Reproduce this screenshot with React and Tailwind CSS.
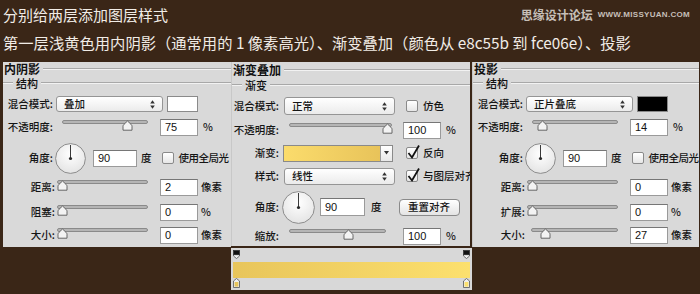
import React from "react";

function UpDown() {
  return (
    <svg width="5" height="9" viewBox="0 0 5 9">
      <path d="M2.5 0.3 L4.8 3.4 L0.2 3.4 Z M2.5 8.7 L4.8 5.6 L0.2 5.6 Z" fill="#333" />
    </svg>
  );
}

function Dropdown({ text, className }) {
  return (
    <div
      className={`flex shrink-0 items-center justify-between rounded-[3px] border border-[#959595] bg-linear-to-b from-white to-[#ebebeb] pl-[7px] pr-[7px] ${className}`}
    >
      <span className="leading-none">{text}</span>
      <UpDown />
    </div>
  );
}

function Slider({ className, pos }) {
  return (
    <div className={`relative h-[16px] shrink-0 ${className}`}>
      <div className="absolute left-0 right-0 top-[1px] h-[4px] rounded-full border border-[#8a8a8a] bg-[#b5b5b5]" />
      <svg className="absolute top-[1px]" style={{ left: pos - 5.5 }} width="11" height="11" viewBox="0 0 11 11">
        <path d="M1 10.2 L1 6.2 Q1 5.2 2 4.3 L5.5 1 L9 4.3 Q10 5.2 10 6.2 L10 10.2 Z" fill="#f3f3f3" stroke="#666" strokeWidth="1" />
      </svg>
    </div>
  );
}

function Field({ v, className }) {
  return (
    <div
      className={`flex shrink-0 items-center border border-[#9a9a9a] border-t-[#767676] bg-white pl-[4px] font-['Liberation_Sans',sans-serif] text-[11px] leading-none text-[#111] ${className}`}
    >
      {v}
    </div>
  );
}

function Dial({ size }) {
  const r = size / 2;
  return (
    <svg className="shrink-0" width={size} height={size} viewBox={`0 0 ${size} ${size}`}>
      <defs>
        <radialGradient id="dialg" cx="50%" cy="35%" r="65%">
          <stop offset="0%" stopColor="#ffffff" />
          <stop offset="100%" stopColor="#e4e4e4" />
        </radialGradient>
      </defs>
      <circle cx={r} cy={r} r={r - 0.6} fill="url(#dialg)" stroke="#8c8c8c" strokeWidth="1" />
      <line x1={r} y1={r} x2={r} y2={2} stroke="#3a3a3a" strokeWidth="1" />
      <circle cx={r} cy={r} r="1.6" fill="#2a2a2a" />
    </svg>
  );
}

function Check({ checked, className }) {
  return (
    <div
      className={`relative h-[12px] w-[12px] shrink-0 rounded-[2px] border border-[#8a8a8a] bg-linear-to-b from-white to-[#e6e6e6] ${className}`}
    >
      {checked && (
        <svg className="absolute -left-[1px] -top-[4px]" width="15" height="16" viewBox="0 0 15 16">
          <path d="M2.5 9 L6 13.5 L13 1.5" fill="none" stroke="#111" strokeWidth="1.8" />
        </svg>
      )}
    </div>
  );
}

function Etch({ className }) {
  return <div className={`h-[2px] border-t border-b border-t-[#a8a8a8] border-b-[#f2f2f2] ${className}`} />;
}

function GroupTitle({ text, h }) {
  return (
    <div className={`flex items-center ${h}`}>
      <span className="pl-[1px] text-[12px] font-bold leading-[14px] text-[#111]">{text}</span>
      <Etch className="ml-[3px] flex-1" />
    </div>
  );
}

function SubTitle({ text }) {
  return (
    <div className="flex h-[14px] items-center">
      <Etch className="w-[10px]" />
      <span className="px-[3px] text-[11px] leading-[14px] text-[#111]">{text}</span>
      <Etch className="flex-1" />
    </div>
  );
}

function Label({ text, w }) {
  return <div className={`shrink-0 text-right leading-none ${w}`}>{text}</div>;
}

function ShadowPanel({ width, title, mode, swatch, opacity, opPos, rows }) {
  return (
    <div className={`flex h-[185px] shrink-0 flex-col bg-[#d9d9d9] ${width}`}>
      <GroupTitle text={title} h="h-[14px]" />
      <SubTitle text="结构" />
      <div className="mt-[4px] flex h-[20px] items-center">
        <Label text="混合模式:" w="w-[50px]" />
        <Dropdown text={mode} className="ml-[3px] h-[16px] w-[107px]" />
        <div className={`ml-[4px] h-[16px] w-[31px] shrink-0 border border-[#8a8a8a] ${swatch}`} />
      </div>
      <div className="mt-[3px] flex h-[20px] items-center">
        <Label text="不透明度:" w="w-[50px]" />
        <Slider className="ml-[9px] w-[86px]" pos={opPos} />
        <Field v={opacity} className="ml-[12px] h-[17px] w-[38px]" />
        <span className="ml-[5px] leading-none">%</span>
      </div>
      <div className="mt-[4px] flex h-[34px] items-center">
        <Label text="角度:" w="w-[50px]" />
        <div className="ml-[2px]">
          <Dial size={31} />
        </div>
        <Field v="90" className="ml-[7px] h-[17px] w-[44px]" />
        <span className="ml-[4px] leading-none">度</span>
        <Check className="ml-[10px]" />
        <span className="ml-[5px] whitespace-nowrap leading-none tracking-[-0.5px]">使用全局光</span>
      </div>
      {rows.map((r, i) => (
        <div key={i} className={`flex h-[20px] items-center ${r.mt}`}>
          <Label text={r.label} w="w-[52px]" />
          <Slider className={r.slider} pos={r.pos} />
          <Field v={r.value} className={`h-[17px] w-[38px] ${r.fieldMl}`} />
          <span className="ml-[3px] leading-none">{r.unit}</span>
        </div>
      ))}
    </div>
  );
}

function OpacityStop() {
  return (
    <svg width="7" height="9" viewBox="0 0 7 9">
      <path d="M0.5 4.5 L6.5 4.5 L6.5 6 L3.5 8.5 L0.5 6 Z" fill="#eeeeee" stroke="#555" strokeWidth="0.8" />
      <rect x="0.5" y="0.5" width="6" height="4.2" fill="#111" stroke="#333" strokeWidth="0.8" />
    </svg>
  );
}

function ColorStop({ color }) {
  return (
    <svg width="7" height="10" viewBox="0 0 7 10">
      <path d="M3.5 0.5 L6.5 3 L6.5 9.5 L0.5 9.5 L0.5 3 Z" fill="#eeeeee" stroke="#555" strokeWidth="0.8" />
      <rect x="1.6" y="4" width="3.8" height="4.6" fill={color} />
    </svg>
  );
}

function GradientPanel() {
  return (
    <div className="flex h-[184px] w-[239px] shrink-0 flex-col border-l border-[#c8c8c8] bg-[#d9d9d9]">
      <GroupTitle text="渐变叠加" h="h-[16px]" />
      <SubTitle text="渐变" />
      <div className="mt-[4px] flex h-[20px] items-center">
        <Label text="混合模式:" w="w-[47px]" />
        <Dropdown text="正常" className="ml-[5px] h-[18px] w-[111px]" />
        <Check className="ml-[11px]" />
        <span className="ml-[5px] leading-none">仿色</span>
      </div>
      <div className="mt-[4px] flex h-[20px] items-center">
        <Label text="不透明度:" w="w-[47px]" />
        <Slider className="ml-[10px] w-[103px]" pos={98} />
        <Field v="100" className="ml-[11px] h-[17px] w-[38px]" />
        <span className="ml-[5px] leading-none">%</span>
      </div>
      <div className="mt-[3px] flex h-[20px] items-center">
        <Label text="渐变:" w="w-[47px]" />
        <div className="ml-[4px] flex h-[17px] w-[110px] shrink-0 border border-[#8a8a8a]">
          <div className="h-full flex-1 bg-linear-to-r from-[#fbdc6c] to-[#e8c35a]" />
          <div className="flex h-full w-[12px] items-center justify-center border-l border-[#9a9a9a] bg-linear-to-b from-white to-[#e8e8e8]">
            <svg width="5" height="4" viewBox="0 0 5 4">
              <path d="M0 0 L5 0 L2.5 3.5 Z" fill="#333" />
            </svg>
          </div>
        </div>
        <Check checked className="ml-[13px]" />
        <span className="ml-[5px] leading-none">反向</span>
      </div>
      <div className="mt-[3px] flex h-[20px] items-center">
        <Label text="样式:" w="w-[47px]" />
        <Dropdown text="线性" className="ml-[5px] h-[17px] w-[111px]" />
        <Check checked className="ml-[11px]" />
        <span className="ml-[5px] block h-[14px] w-[48px] overflow-hidden whitespace-nowrap leading-[14px]">与图层对齐</span>
      </div>
      <div className="mt-[4px] flex h-[34px] items-center">
        <Label text="角度:" w="w-[47px]" />
        <div className="ml-[3px]">
          <Dial size={33} />
        </div>
        <Field v="90" className="ml-[5px] h-[18px] w-[45px]" />
        <span className="ml-[6px] leading-none">度</span>
        <div className="ml-[17px] flex h-[17px] w-[61px] shrink-0 items-center justify-center rounded-[4px] border border-[#8a8a8a] bg-linear-to-b from-white to-[#e4e4e4] leading-none">
          重置对齐
        </div>
      </div>
      <div className="mt-[2px] flex h-[20px] items-center">
        <Label text="缩放:" w="w-[47px]" />
        <Slider className="ml-[10px] w-[97px]" pos={59} />
        <Field v="100" className="ml-[17px] h-[17px] w-[38px]" />
        <span className="ml-[5px] leading-none">%</span>
      </div>
    </div>
  );
}

function GradientBar() {
  return (
    <div className="mt-[2px] flex h-[42px] w-[241px] flex-col bg-[#d8d8d8] px-[2px] pt-[2px] pb-[2px]">
      <div className="flex h-[9px] justify-between">
        <OpacityStop />
        <OpacityStop />
      </div>
      <div className="mt-[3px] h-[16px] bg-linear-to-r from-[#e8c55b] to-[#fce06e]" />
      <div className="flex h-[10px] justify-between">
        <ColorStop color="#e8c55b" />
        <ColorStop color="#fce06e" />
      </div>
    </div>
  );
}

export default function App() {
  return (
    <div className="h-[294px] w-[700px] overflow-hidden bg-[#3a2617] font-['Noto_Sans_CJK_SC','Noto_Sans',sans-serif]">
      <div className="mt-[5px] flex h-[20px] items-center justify-between pl-[3px] pr-[10px]">
        <div className="text-[15px] leading-[20px] text-[#f1ece6]">分别给两层添加图层样式</div>
        <div className="flex items-center text-[#c6bfb7]">
          <span className="text-[12px] font-bold leading-none">思缘设计论坛</span>
          <span className="ml-[5px] font-['Liberation_Sans',sans-serif] text-[8px] font-bold leading-none tracking-[0.3px]">
            WWW.MISSYUAN.COM
          </span>
        </div>
      </div>
      <div className="mt-[7px] h-[20px] whitespace-nowrap pl-[3px] text-[15.3px] leading-[20px] text-[#f1ece6]">
        第一层浅黄色用内阴影（通常用的 1 像素高光）、渐变叠加（颜色从 e8c55b 到 fce06e）、投影
      </div>
      <div className="mt-[10px] flex items-start pl-[3px] text-[10.5px] font-medium text-[#151515]">
        <ShadowPanel
          width="w-[228px]"
          title="内阴影"
          mode="叠加"
          swatch="bg-white"
          opacity="75"
          opPos={65}
          rows={[
            { label: "距离:", value: "2", unit: "像素", pos: 5, mt: "mt-[2px]", slider: "ml-[2px] w-[91px]", fieldMl: "ml-[12px]" },
            { label: "阻塞:", value: "0", unit: "%", pos: 5, mt: "mt-[5px]", slider: "ml-[2px] w-[91px]", fieldMl: "ml-[12px]" },
            { label: "大小:", value: "0", unit: "像素", pos: 5, mt: "mt-[3px]", slider: "ml-[2px] w-[91px]", fieldMl: "ml-[12px]" },
          ]}
        />
        <div className="flex shrink-0 flex-col">
          <GradientPanel />
          <GradientBar />
        </div>
        <ShadowPanel
          width="w-[227px] border-l border-[#c8c8c8]"
          title="投影"
          mode="正片叠底"
          swatch="bg-black"
          opacity="14"
          opPos={10}
          rows={[
            { label: "距离:", value: "0", unit: "像素", pos: 5, mt: "mt-[2px]", slider: "ml-[2px] w-[91px]", fieldMl: "ml-[12px]" },
            { label: "扩展:", value: "0", unit: "%", pos: 5, mt: "mt-[5px]", slider: "ml-[2px] w-[91px]", fieldMl: "ml-[12px]" },
            { label: "大小:", value: "27", unit: "像素", pos: 14, mt: "mt-[3px]", slider: "ml-[6px] w-[87px]", fieldMl: "ml-[12px]" },
          ]}
        />
      </div>
    </div>
  );
}
